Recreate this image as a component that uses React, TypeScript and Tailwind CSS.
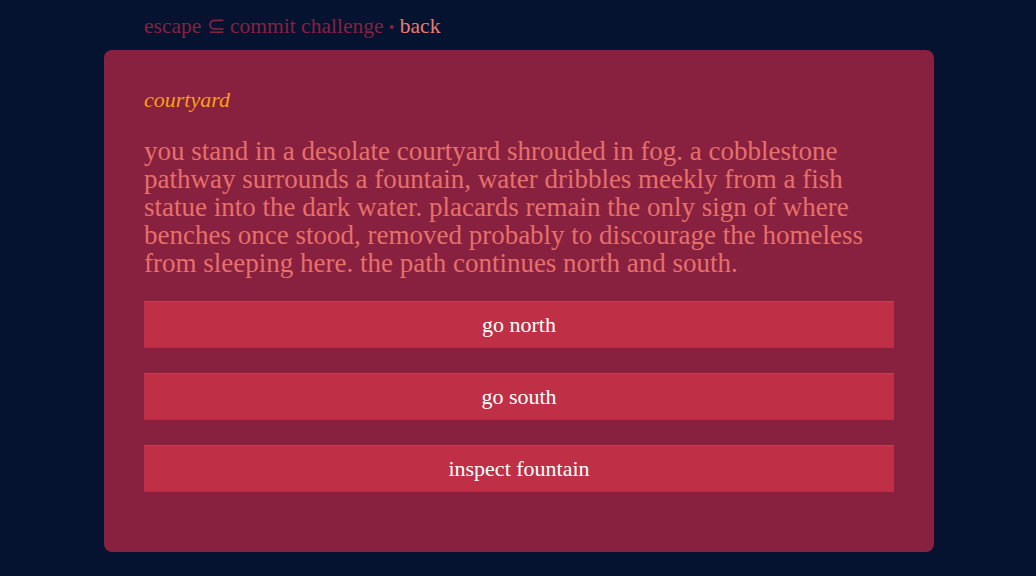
export default function App() {
  const actions = ['go north', 'go south', 'inspect fountain']

  return (
    <div className="min-h-screen bg-[#061330] font-['Liberation_Serif',serif]">
      <div className="ml-[104px] w-[830px] pt-[12px]">
        {/* breadcrumb */}
        <p className="h-[28px] px-10 text-[21.5px] leading-[28px] text-[#88203f]">
          escape ⊆ commit challenge <span className="text-[16px] leading-none">•</span>{' '}
          <span className="text-[#ec7b72]">back</span>
        </p>

        {/* room card */}
        <div className="mt-[10px] h-[502px] rounded-lg bg-[#88203f] px-10 pt-[38px]">
          <h2 className="text-[22px] italic leading-[24px] text-[#f5a01a]">courtyard</h2>
          <p className="mt-[25px] text-[27px] leading-[28px] text-[#e6706a]">
            you stand in a desolate courtyard shrouded in fog. a cobblestone pathway surrounds a
            fountain, water dribbles meekly from a fish statue into the dark water. placards remain
            the only sign of where benches once stood, removed probably to discourage the homeless
            from sleeping here. the path continues north and south.
          </p>
          <div className="mt-[24px] flex flex-col gap-[25px]">
            {actions.map((a) => (
              <button
                key={a}
                className="h-[47px] w-full border-t border-b border-t-[#c83d50] border-b-[#b82a40] bg-[#bf2f45] text-[22px] text-white"
              >
                {a}
              </button>
            ))}
          </div>
        </div>
      </div>
    </div>
  )
}
